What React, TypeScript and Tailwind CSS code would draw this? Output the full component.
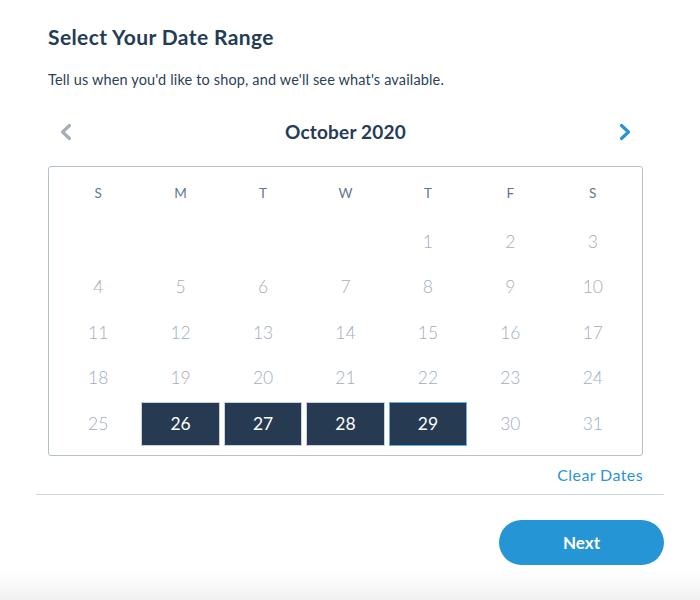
// React
import React from "react";

// ========================================================================================================

const DAYS = ["S", "M", "T", "W", "T", "F", "S"];

// October 2020 starts on a Thursday
const WEEKS: (number | null)[][] = [
  [null, null, null, null, 1, 2, 3],
  [4, 5, 6, 7, 8, 9, 10],
  [11, 12, 13, 14, 15, 16, 17],
  [18, 19, 20, 21, 22, 23, 24],
  [25, 26, 27, 28, 29, 30, 31],
];

const RANGE_START = 26;
const RANGE_END = 29;

function Chevron({ dir, color }: { dir: "left" | "right"; color: string }) {
  return (
    <svg width="14" height="18" viewBox="0 0 14 18" fill="none">
      <polyline
        points={dir === "left" ? "10.5,2.5 3.5,9 10.5,15.5" : "3.5,2.5 10.5,9 3.5,15.5"}
        stroke={color}
        strokeWidth="3.2"
        strokeLinecap="round"
        strokeLinejoin="round"
      />
    </svg>
  );
}

export default function App() {
  return (
    <div
      className="relative flex h-[600px] w-[700px] flex-col overflow-hidden bg-white text-[#253b56]"
      style={{ fontFamily: "Lato, 'Noto Sans', sans-serif" }}
    >
      <div className="px-12 pt-[23px]">
        {/* Title */}
        <h1 className="text-[21px] font-bold leading-[28px] tracking-[0.4px]">
          Select Your Date Range
        </h1>

        <p className="mt-[19px] text-[14.5px] leading-[20px] tracking-[0.15px] text-[#2c3f57]">
          Tell us when you'd like to shop, and we'll see what's available.
        </p>

        {/* Month header */}
        <div className="mt-[26px] flex h-8 w-[595px] items-center justify-between px-[11px]">
          <button type="button" className="flex items-center">
            <Chevron dir="left" color="#a3aebb" />
          </button>
          <h2 className="text-[19px] font-bold leading-8 tracking-[0.2px]">October 2020</h2>
          <button type="button" className="flex items-center">
            <Chevron dir="right" color="#2a93d5" />
          </button>
        </div>

        {/* Calendar */}
        <div className="mt-[18px] w-[595px] rounded-[3px] border border-[#b3bfcc] px-2 pb-[8.5px]">
          <div className="grid h-[52px] grid-cols-7 items-center">
            {DAYS.map((d, i) => (
              <div key={i} className="text-center text-[13.5px] text-[#63768c]">
                {d}
              </div>
            ))}
          </div>

          {WEEKS.map((week, wi) => (
            <div key={wi} className="grid h-[45.5px] grid-cols-7">
              {week.map((day, di) => {
                const selected = day !== null && day >= RANGE_START && day <= RANGE_END;
                const isEnd = day === RANGE_END;
                return (
                  <div key={di} className="px-[2px] py-[1px]">
                    {day !== null && (
                      <div
                        className={
                          selected
                            ? `flex h-full items-center justify-center border bg-[#263a52] text-[17.5px] text-white ${
                                isEnd ? "border-[#62b2e8]" : "border-[#c9d1da]"
                              }`
                            : "flex h-full items-center justify-center text-[17.5px] font-light text-[#a2aebc]"
                        }
                      >
                        {day}
                      </div>
                    )}
                  </div>
                );
              })}
            </div>
          ))}
        </div>

        <div className="mt-[9px] flex w-[595px] justify-end">
          <button type="button" className="text-[16px] leading-5 tracking-[0.4px] text-[#2b93d6]">
            Clear Dates
          </button>
        </div>
      </div>

      {/* Divider */}
      <div className="mx-9 mt-[9px] border-t-[1.5px] border-[#ccd5de]" />

      {/* Footer */}
      <div className="mt-[25px] flex justify-end pr-9">
        <button
          type="button"
          className="h-[45px] w-[165px] rounded-full bg-[#2695d6] text-[17px] font-bold text-white"
        >
          Next
        </button>
      </div>

      <div className="mt-auto h-[28px] bg-gradient-to-b from-white to-[#f1f1f1]" />
    </div>
  );
}
